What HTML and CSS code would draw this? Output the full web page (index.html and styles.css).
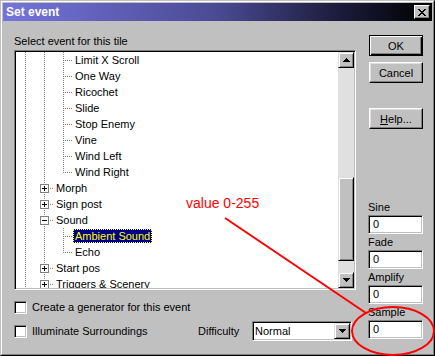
FILE: index.html
```html
<!DOCTYPE html>
<html lang="en">
<head>
  <meta charset="UTF-8">
  <meta name="viewport" content="width=device-width, initial-scale=1.0">
  <title>Set event</title>
  <link rel="stylesheet" href="styles.css">
</head>
<body>
  <div class="window">
    <div class="frame">
      <div class="titlebar">
        <span class="title">Set event</span>
        <button class="close" aria-label="Close">
          <svg width="8" height="7" viewBox="0 0 8 7" shape-rendering="crispEdges"><path d="M0 0h2v1H0zM6 0h2v1H6zM1 1h2v1H1zM5 1h2v1H5zM2 2h4v1H2zM3 3h2v1H3zM2 4h4v1H2zM1 5h2v1H1zM5 5h2v1H5zM0 6h2v1H0zM6 6h2v1H6z"/></svg>
        </button>
      </div>

      <div class="content">
        <div class="left">
          <div class="caption">Select event for this tile</div>

          <div class="tree">
            <div class="items">
              <div class="row"><i class="g pipe"></i><i class="g pipe"></i><i class="g tee"></i><span class="label">Limit X Scroll</span></div>
              <div class="row"><i class="g pipe"></i><i class="g pipe"></i><i class="g tee"></i><span class="label">One Way</span></div>
              <div class="row"><i class="g pipe"></i><i class="g pipe"></i><i class="g tee"></i><span class="label">Ricochet</span></div>
              <div class="row"><i class="g pipe"></i><i class="g pipe"></i><i class="g tee"></i><span class="label">Slide</span></div>
              <div class="row"><i class="g pipe"></i><i class="g pipe"></i><i class="g tee"></i><span class="label">Stop Enemy</span></div>
              <div class="row"><i class="g pipe"></i><i class="g pipe"></i><i class="g tee"></i><span class="label">Vine</span></div>
              <div class="row"><i class="g pipe"></i><i class="g pipe"></i><i class="g tee"></i><span class="label">Wind Left</span></div>
              <div class="row"><i class="g pipe"></i><i class="g pipe"></i><i class="g elbow"></i><span class="label">Wind Right</span></div>
              <div class="row"><i class="g pipe"></i><i class="g node"><b class="expander plus"></b></i><span class="label">Morph</span></div>
              <div class="row"><i class="g pipe"></i><i class="g node"><b class="expander plus"></b></i><span class="label">Sign post</span></div>
              <div class="row"><i class="g pipe"></i><i class="g node"><b class="expander"></b></i><span class="label">Sound</span></div>
              <div class="row"><i class="g pipe"></i><i class="g pipe"></i><i class="g tee"></i><span class="label selected">Ambient Sound</span></div>
              <div class="row"><i class="g pipe"></i><i class="g pipe"></i><i class="g elbow"></i><span class="label">Echo</span></div>
              <div class="row"><i class="g pipe"></i><i class="g node"><b class="expander plus"></b></i><span class="label">Start pos</span></div>
              <div class="row"><i class="g pipe"></i><i class="g node"><b class="expander plus"></b></i><span class="label">Triggers &amp; Scenery</span></div>
            </div>
            <div class="scrollbar">
              <div class="raised arrow">
                <svg width="7" height="4" viewBox="0 0 7 4" shape-rendering="crispEdges"><path d="M3 0h1v1h1v1h1v1h1v1H0V3h1V2h1V1h1z"/></svg>
              </div>
              <div class="track">
                <div class="raised thumb"></div>
              </div>
              <div class="raised arrow">
                <svg width="7" height="4" viewBox="0 0 7 4" shape-rendering="crispEdges"><path d="M0 0h7v1H6v1H5v1H4v1H3V3H2V2H1V1H0z"/></svg>
              </div>
            </div>
          </div>

          <label class="check first"><span class="box"></span>Create a generator for this event</label>
          <div class="options">
            <label class="check"><span class="box"></span>Illuminate Surroundings</label>
            <span class="difficulty">Difficulty</span>
            <div class="combo">
              <span class="combo-text">Normal</span>
              <span class="raised arrow">
                <svg width="7" height="4" viewBox="0 0 7 4" shape-rendering="crispEdges"><path d="M0 0h7v1H6v1H5v1H4v1H3V3H2V2H1V1H0z"/></svg>
              </span>
            </div>
          </div>
        </div>

        <div class="right">
          <button class="btn default">OK</button>
          <button class="btn cancel">Cancel</button>
          <button class="btn help"><u>H</u>elp...</button>

          <div class="fields">
            <div class="field"><div class="field-label">Sine</div><div class="edit">0</div></div>
            <div class="field"><div class="field-label">Fade</div><div class="edit">0</div></div>
            <div class="field"><div class="field-label">Amplify</div><div class="edit">0</div></div>
            <div class="field"><div class="field-label">Sample</div><div class="edit">0</div></div>
          </div>
        </div>
      </div>
    </div>

    <!-- annotation drawn over the dialog -->
    <svg class="annotation" width="435" height="356" viewBox="0 0 435 356">
      <line x1="225" y1="218" x2="366" y2="313" stroke="#f00" stroke-width="2"/>
      <ellipse cx="393" cy="331" rx="41" ry="24" fill="none" stroke="#f00" stroke-width="2"/>
    </svg>
    <div class="note">value 0-255</div>
  </div>
</body>
</html>
```

FILE: styles.css
```css
* {
  margin: 0;
  padding: 0;
  box-sizing: border-box;
}
body {
  background: #c0c0c0;
  color: #000;
  font-family: "Liberation Sans", Arial, sans-serif;
  font-size: 11px;
}
button {
  font: inherit;
  color: inherit;
}
.window {
  position: relative;
  width: 435px;
  height: 356px;
  border: 1px solid;
  border-color: #c0c0c0 #000 #000 #c0c0c0;
}
.frame {
  height: 100%;
  display: flex;
  flex-direction: column;
  border: 1px solid;
  border-color: #fff #808080 #808080 #fff;
  padding: 1px;
}
.titlebar {
  height: 18px;
  display: flex;
  align-items: center;
  justify-content: space-between;
  padding: 0 2px 0 3px;
  background: linear-gradient(90deg, #7474dc 0%, #4a4a94 50%, #1c1c3c 78%, #000 100%);
  color: #fff;
}
.title {
  font-size: 12px;
  font-weight: bold;
  line-height: 18px;
}
.raised {
  background: #c0c0c0;
  border: 1px solid;
  border-color: #dfdfdf #000 #000 #dfdfdf;
  box-shadow: inset 1px 1px #fff, inset -1px -1px #808080;
}
.close {
  width: 16px;
  height: 14px;
  display: flex;
  align-items: center;
  justify-content: center;
  background: #c0c0c0;
  border: 1px solid;
  border-color: #fff #000 #000 #fff;
  box-shadow: inset -1px -1px #808080;
}
.content {
  flex: 1;
  display: flex;
  gap: 12px;
  padding: 14px 0 0 11px;
}
.left {
  width: 342px;
}
.caption {
  line-height: 13px;
  margin-bottom: 2px;
}

/* sunken field border */
.tree, .edit, .box, .combo {
  background: #fff;
  border: 1px solid;
  border-color: #808080 #fff #fff #808080;
  box-shadow: inset 1px 1px #000, inset -1px -1px #c0c0c0;
  padding: 1px;
}
.tree {
  height: 240px;
  display: flex;
  overflow: hidden;
}
.items {
  flex: 1;
  overflow: hidden;
}
.row {
  height: 16px;
  display: flex;
  align-items: center;
  white-space: nowrap;
}
.g {
  flex: 0 0 19px;
  height: 16px;
}
.pipe {
  background: repeating-linear-gradient(#808080 0 1px, transparent 1px 2px) 9px 0 / 1px 100% no-repeat;
}
.tee {
  background:
    repeating-linear-gradient(#808080 0 1px, transparent 1px 2px) 9px 0 / 1px 100% no-repeat,
    repeating-linear-gradient(90deg, #808080 0 1px, transparent 1px 2px) 11px 8px / 8px 1px no-repeat;
}
.elbow {
  background:
    repeating-linear-gradient(#808080 0 1px, transparent 1px 2px) 9px 0 / 1px 9px no-repeat,
    repeating-linear-gradient(90deg, #808080 0 1px, transparent 1px 2px) 11px 8px / 8px 1px no-repeat;
}
.node {
  background:
    repeating-linear-gradient(#808080 0 1px, transparent 1px 2px) 9px 0 / 1px 100% no-repeat,
    repeating-linear-gradient(90deg, #808080 0 1px, transparent 1px 2px) 15px 8px / 4px 1px no-repeat;
}
.expander {
  display: block;
  width: 9px;
  height: 9px;
  margin: 4px 0 0 5px;
  border: 1px solid #808080;
  background:
    linear-gradient(#000, #000) 1px 3px / 5px 1px no-repeat,
    #fff;
}
.expander.plus {
  background:
    linear-gradient(#000, #000) 1px 3px / 5px 1px no-repeat,
    linear-gradient(#000, #000) 3px 1px / 1px 5px no-repeat,
    #fff;
}
.label {
  padding: 0 2px;
  line-height: 14px;
}
.label.selected {
  background: #000080;
  color: #ff0;
  outline: 1px dotted #ffff80;
  outline-offset: -1px;
}
.scrollbar {
  width: 16px;
  display: flex;
  flex-direction: column;
}
.arrow {
  height: 16px;
  flex: 0 0 16px;
  display: flex;
  align-items: center;
  justify-content: center;
}
.track {
  flex: 1;
  background: #e0e0e0;
  padding-top: 109px;
}
.thumb {
  height: 84px;
}

.check {
  display: flex;
  align-items: center;
  line-height: 13px;
}
.check.first {
  margin-top: 11px;
}
.box {
  width: 13px;
  height: 13px;
  margin-right: 5px;
}
.options {
  margin-top: 7px;
  height: 20px;
  display: grid;
  grid-template-columns: 184px 54px 100px;
  align-items: center;
}
.combo {
  height: 20px;
  display: flex;
  align-items: center;
  justify-content: space-between;
}
.combo-text {
  padding-left: 1px;
}

.right {
  width: 55px;
  display: flex;
  flex-direction: column;
}
.btn {
  width: 54px;
  height: 21px;
  margin-left: 1px;
  background: #c0c0c0;
  border: 1px solid;
  border-color: #fff #000 #000 #fff;
  box-shadow: inset -1px -1px #808080, inset 1px 1px #dfdfdf;
}
.btn.default {
  border-color: #000;
  box-shadow: inset 1px 1px #fff, inset -1px -1px #000, inset -2px -2px #808080;
}
.cancel {
  margin-top: 6px;
}
.help {
  margin-top: 25px;
}
.fields {
  margin-top: 72px;
  display: flex;
  flex-direction: column;
  gap: 2px;
}
.field-label {
  line-height: 13px;
  margin-bottom: 1px;
}
.edit {
  height: 19px;
  padding-left: 4px;
  line-height: 15px;
}

.annotation {
  position: absolute;
  top: -1px;
  left: -1px;
  pointer-events: none;
}
.note {
  position: absolute;
  top: 194px;
  left: 185px;
  color: #f00;
  font-size: 14px;
  line-height: 16px;
}
```
